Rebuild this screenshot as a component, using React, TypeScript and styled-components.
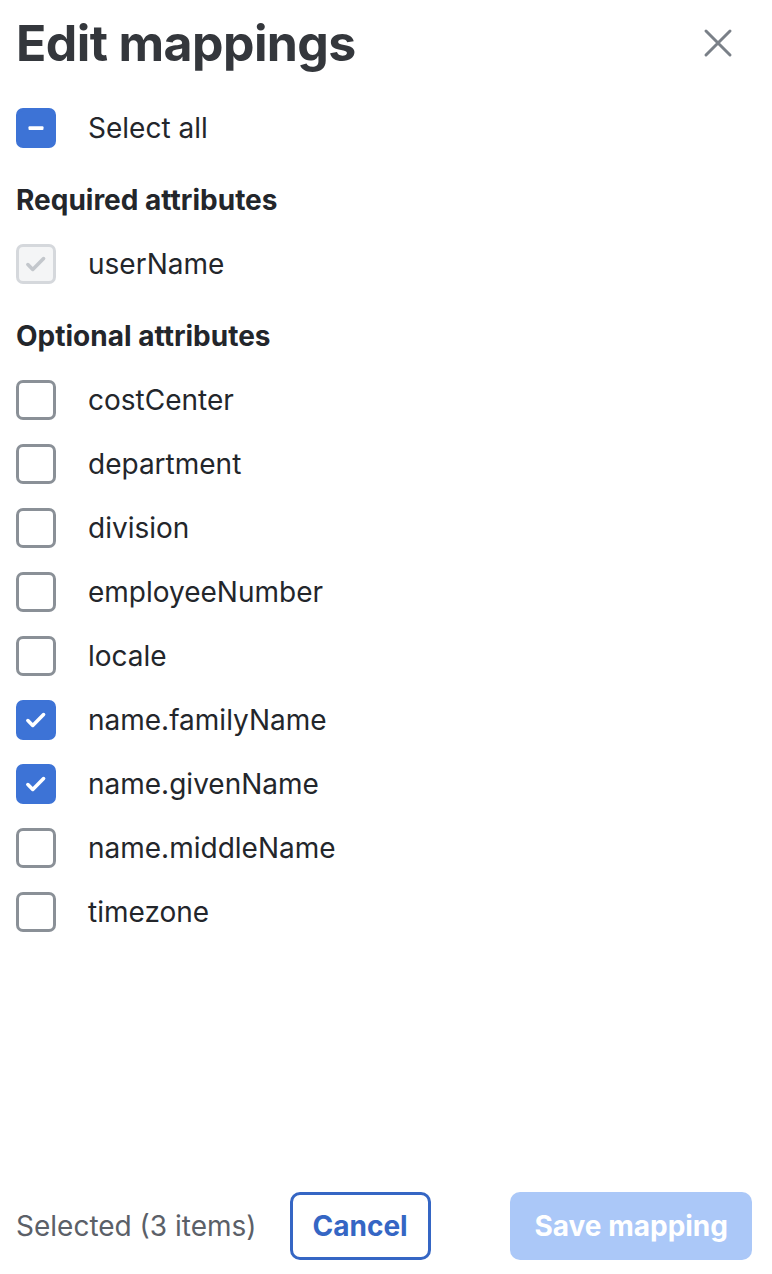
import React, { useState } from 'react';
import styled, { createGlobalStyle } from 'styled-components';

type Attr = { name: string; checked: boolean };

const GlobalStyle = createGlobalStyle`
  html, body {
    margin: 0;
    padding: 0;
    background: #ffffff;
  }
  body {
    font-family: Inter, "Noto Sans", sans-serif;
    color: #23262b;
  }
`;

const Panel = styled.div`
  box-sizing: border-box;
  width: 772px;
  height: 1274px;
  display: flex;
  flex-direction: column;
  padding: 0 20px 14px 16px;
`;

const Header = styled.div`
  display: flex;
  align-items: center;
  justify-content: space-between;
  height: 86px;
  margin-bottom: 10px;
`;

const Title = styled.h1`
  margin: 0;
  font-size: 50px;
  font-weight: 700;
  letter-spacing: -0.6px;
  color: #34373c;
`;

const CloseButton = styled.button`
  border: none;
  background: none;
  padding: 0;
  width: 40px;
  height: 40px;
  display: flex;
  align-items: center;
  justify-content: center;
  margin-right: 14px;
  cursor: pointer;
`;

const Body = styled.div`
  flex: 1;
  display: flex;
  flex-direction: column;
`;

const Row = styled.label`
  display: flex;
  align-items: center;
  height: 64px;
  gap: 32px;
  font-size: 28px;
  color: #23262b;
  cursor: pointer;
`;

const SectionTitle = styled.h2`
  margin: 0;
  padding-top: 8px;
  height: 64px;
  display: flex;
  align-items: center;
  font-size: 28px;
  font-weight: 700;
  color: #23262b;
`;

const Box = styled.span<{ $state: 'on' | 'off' | 'disabled' | 'mixed' }>`
  box-sizing: border-box;
  width: 40px;
  height: 40px;
  flex: none;
  border-radius: 7px;
  display: flex;
  align-items: center;
  justify-content: center;
  border: 3px solid
    ${(p) =>
      p.$state === 'off' ? '#8a9097' : p.$state === 'disabled' ? '#d5d8dc' : '#3d73d6'};
  background: ${(p) =>
    p.$state === 'off' ? '#ffffff' : p.$state === 'disabled' ? '#f4f5f6' : '#3d73d6'};
`;

const Footer = styled.div`
  display: flex;
  align-items: center;
  height: 68px;
`;

const Count = styled.span`
  font-size: 28px;
  color: #5b6068;
  margin-right: 33px;
`;

const OutlineButton = styled.button`
  box-sizing: border-box;
  height: 68px;
  padding: 0 20px;
  border: 3px solid #3566c4;
  border-radius: 10px;
  background: #fff;
  color: #3566c4;
  font-family: inherit;
  font-size: 28px;
  font-weight: 700;
`;

const PrimaryButton = styled.button`
  box-sizing: border-box;
  margin-left: auto;
  height: 68px;
  padding: 0 24px;
  border: none;
  border-radius: 10px;
  background: #abc8f8;
  color: #ffffff;
  font-family: inherit;
  font-size: 28px;
  font-weight: 700;
`;

const Check = ({ color }: { color: string }) => (
  <svg width="26" height="26" viewBox="0 0 24 24" fill="none">
    <path d="M4.5 12.5l4.5 4.5L19 7" stroke={color} strokeWidth="3.3" strokeLinecap="round" strokeLinejoin="round" />
  </svg>
);

const Checkbox = ({ state }: { state: 'on' | 'off' | 'disabled' | 'mixed' }) => (
  <Box $state={state}>
    {state === 'on' && <Check color="#ffffff" />}
    {state === 'disabled' && <Check color="#c3c7cc" />}
    {state === 'mixed' && (
      <svg width="20" height="20" viewBox="0 0 20 20">
        <rect x="2.5" y="8.2" width="15" height="3.8" rx="1" fill="#ffffff" />
      </svg>
    )}
  </Box>
);

const initial: Attr[] = [
  { name: 'costCenter', checked: false },
  { name: 'department', checked: false },
  { name: 'division', checked: false },
  { name: 'employeeNumber', checked: false },
  { name: 'locale', checked: false },
  { name: 'name.familyName', checked: true },
  { name: 'name.givenName', checked: true },
  { name: 'name.middleName', checked: false },
  { name: 'timezone', checked: false },
];

const App = () => {
  const [attrs, setAttrs] = useState<Attr[]>(initial);
  const selected = attrs.filter((a) => a.checked).length + 1;
  const all = attrs.every((a) => a.checked);

  const toggle = (name: string) =>
    setAttrs((prev) => prev.map((a) => (a.name === name ? { ...a, checked: !a.checked } : a)));

  return (
    <>
      <GlobalStyle />
      <Panel>
        <Header>
          <Title>Edit mappings</Title>
          <CloseButton aria-label="Close">
            <svg width="30" height="30" viewBox="0 0 30 30">
              <path d="M3 3L27 27M27 3L3 27" stroke="#7a8088" strokeWidth="3" strokeLinecap="round" />
            </svg>
          </CloseButton>
        </Header>
        <Body>
          <Row onClick={() => setAttrs((prev) => prev.map((a) => ({ ...a, checked: !all })))}>
            <Checkbox state={all ? 'on' : 'mixed'} />
            Select all
          </Row>
          <SectionTitle>Required attributes</SectionTitle>
          <Row>
            <Checkbox state="disabled" />
            userName
          </Row>
          <SectionTitle>Optional attributes</SectionTitle>
          {attrs.map((a) => (
            <Row key={a.name} onClick={() => toggle(a.name)}>
              <Checkbox state={a.checked ? 'on' : 'off'} />
              {a.name}
            </Row>
          ))}
        </Body>
        <Footer>
          <Count>Selected ({selected} items)</Count>
          <OutlineButton>Cancel</OutlineButton>
          <PrimaryButton disabled>Save mapping</PrimaryButton>
        </Footer>
      </Panel>
    </>
  );
};

export default App;
